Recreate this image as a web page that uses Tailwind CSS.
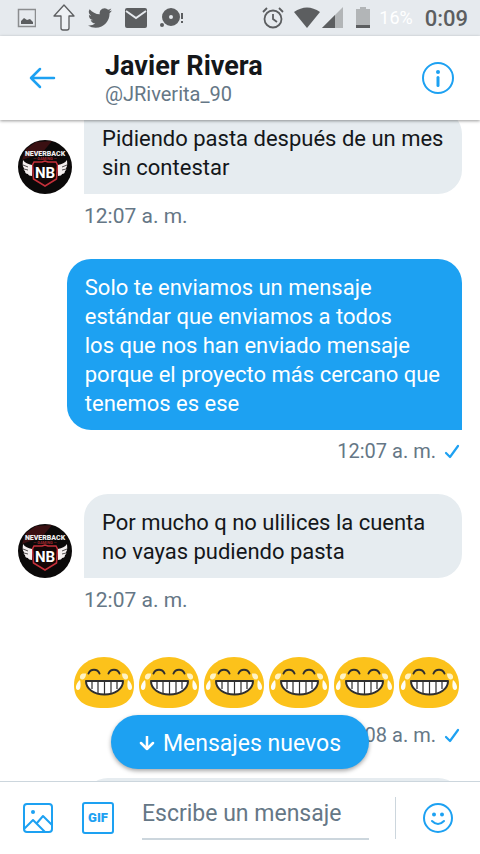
<!DOCTYPE html>
<html lang="es">
<head>
    <meta charset="UTF-8">
    <meta name="viewport" content="width=device-width, initial-scale=1.0">
    <title>Javier Rivera</title>
    <script src="https://cdn.jsdelivr.net/npm/@tailwindcss/browser@4"></script>
</head>
<body class="bg-white font-['Roboto','Noto_Sans',sans-serif]">

<!-- Shared drawings -->
<svg class="hidden">
    <symbol id="avatar" viewBox="0 0 54 54">
        <circle cx="27" cy="27" r="27" fill="#0b0909"/>
        <path d="M8 9 18 2 34 1 24 13 4 20Z" fill="#3a1012"/>
        <path d="M16 22h8l3-1 3 1h8l1.500 3-1 14L27 46l-11.500-7-1-14Z" fill="#140607" stroke="#c5303a" stroke-width="1.500"/>
        <path d="M5 20c2 3 5 4 9 5v11c-2 0-4-1-4-2-2 0-3-1-3-3-2-1-1-2-1-3-2-2-1-6-1-8Z" fill="#f3eeee"/>
        <path d="M49 20c-2 3-5 4-9 5v11c2 0 4-1 4-2 2 0 3-1 3-3 2-1 1-2 1-3 2-2 1-6 1-8Z" fill="#f3eeee"/>
        <path d="m5 25 5 2M6 29l4 1M49 25l-5 2M48 29l-4 1" stroke="#0b0909" stroke-width=".7"/>
        <text x="27" y="16" text-anchor="middle" font-size="7" font-weight="900" fill="#eee">NEVERBACK</text>
        <text x="27" y="20" text-anchor="middle" font-size="4" font-weight="700" fill="#a3262e">— GAMING —</text>
        <text x="27" y="38" text-anchor="middle" font-size="15" font-weight="700" fill="#fff">NB</text>
    </symbol>
    <symbol id="laugh" viewBox="0 0 61 52">
        <path d="M30 0C47 0 60 12 60 28 60 43 50 51 30 51S0 43 0 28C0 12 13 0 30 0Z" fill="#fcc21b"/>
        <path d="M14.500 16.500c2-5 9-5 11 0M34.500 16.500c2-5 9-5 11 0" fill="none" stroke="#2f2f2f" stroke-width="2" stroke-linecap="round"/>
        <path d="M12 24h37c0 8-8 13.500-18.500 13.500S12 32 12 24Z" fill="#fff" stroke="#2f2f2f" stroke-width="2" stroke-linejoin="round"/>
        <path d="M18 24v8M24 24v12M30.500 24v13M37 24v12M43 24v8" stroke="#2f2f2f" stroke-width="1.200"/>
        <path d="M12 16.500c0 4-2 6-4 6s-3-3-1-5 3-.500 5-1ZM48 16.500c0 4 2 6 4 6s3-3 1-5-3-.500-5-1Z" fill="#fff3c4"/>
        <path d="M6 23c1 4 1 10-2 10s-3-6 2-10ZM54 23c-1 4-1 10 2 10s3-6-2-10Z" fill="#fdfdf6"/>
    </symbol>
    <symbol id="check" viewBox="0 0 16 16">
        <path d="m2 9 4 4 8-11" fill="none" stroke="#1da1f2" stroke-width="2.200" stroke-linecap="round" stroke-linejoin="round"/>
    </symbol>
</svg>

<div class="flex h-screen flex-col overflow-hidden">

    <!-- Status bar -->
    <div class="flex h-9 shrink-0 items-center justify-between bg-[#e6eaee] pl-4 pr-3 text-[#5c5e60]">
        <div class="flex items-center gap-3">
            <svg class="mr-1 h-5 w-5" viewBox="0 0 20 20"><rect x="2.500" y="1.500" width="17" height="17" fill="none" stroke="#8b8d8f" stroke-width="1.500"/><path d="M5 16v-3l3-3 3 2 3-1 3 3v2Z" fill="currentColor"/></svg>
            <svg class="h-7 w-6" viewBox="0 0 24 28"><path d="M12 1 22 12h-5v12q0 2-2 2h-4q-2 0-2-2V12H2Z" fill="#eef1f4" stroke="currentColor" stroke-width="1.300" stroke-linejoin="round"/></svg>
            <svg class="h-6 w-6" viewBox="0 0 24 24" fill="currentColor"><path d="M23.950 4.570a10 10 0 0 1-2.820.770 4.960 4.960 0 0 0 2.160-2.720c-.950.550-2 .950-3.130 1.180a4.920 4.920 0 0 0-8.380 4.480C7.690 8.100 4.070 6.130 1.640 3.160a4.930 4.930 0 0 0 1.520 6.580 4.900 4.900 0 0 1-2.230-.620v.060a4.920 4.920 0 0 0 3.950 4.830 5 5 0 0 1-2.210.080 4.940 4.940 0 0 0 4.600 3.420A9.870 9.870 0 0 1 0 19.540a14 14 0 0 0 7.550 2.210c9.050 0 14-7.500 14-13.980 0-.210 0-.420-.020-.630a10 10 0 0 0 2.420-2.570Z"/></svg>
            <svg class="h-6 w-6" viewBox="0 0 24 24"><rect x="1" y="2" width="22" height="20" rx="2" fill="currentColor"/><path d="m2 5 10 7 10-7" fill="none" stroke="#e6eaee" stroke-width="2"/></svg>
            <svg class="h-6 w-6" viewBox="0 0 24 24" fill="currentColor"><path d="M11 2a9 9 0 1 1 0 18 9 9 0 0 1 0-18Zm0 7a2 2 0 1 0 0 4 2 2 0 0 0 0-4Z" fill-rule="evenodd"/><circle cx="2" cy="19" r="2"/><path d="M21 7h2v6h-2zM21 15h2v2h-2z"/></svg>
        </div>
        <div class="flex items-center">
            <svg class="h-6 w-6" viewBox="0 0 24 24" fill="none" stroke="currentColor" stroke-width="1.800"><circle cx="12" cy="13" r="8.500"/><path d="M12 8v5l4 3M2 6l4-4M22 6l-4-4"/></svg>
            <svg class="ml-2 h-6 w-7" viewBox="0 0 28 24"><path d="M1 6q13-9 26 0L14 22Z" fill="currentColor"/></svg>
            <svg class="h-6 w-6" viewBox="0 0 24 24"><path d="M1 22 22 1v21Z" fill="#b2b5b7"/><path d="M1 22 14 9v13Z" fill="currentColor"/></svg>
            <svg class="ml-1.5 h-6 w-6" viewBox="0 0 24 24"><path d="M5 3h4V1h6v2h4v19H5Z" fill="#b2b5b7"/><path d="M5 19h14v3H5z" fill="currentColor"/></svg>
            <span class="ml-1 text-lg text-white">16%</span>
            <span class="ml-3 text-[22px] font-medium">0:09</span>
        </div>
    </div>

    <!-- Header -->
    <header class="z-10 flex h-[84px] shrink-0 items-center bg-white pl-7 pr-6 shadow-[0_1px_3px_rgba(0,0,0,0.4)]">
        <button type="button" aria-label="Atrás" class="text-[#1da1f2]">
            <svg class="h-7 w-7" viewBox="0 0 28 28" fill="none" stroke="currentColor" stroke-width="2.500" stroke-linecap="round" stroke-linejoin="round"><path d="M26 14H3M12 5l-9 9 9 9"/></svg>
        </button>
        <div class="ml-[49px] flex-1">
            <h1 class="text-[27px] leading-8 font-bold text-[#14171a]">Javier Rivera</h1>
            <p class="text-xl leading-6 text-[#657786]">@JRiverita_90</p>
        </div>
        <button type="button" aria-label="Información" class="text-[#1da1f2]">
            <svg class="h-9 w-9" viewBox="0 0 36 36"><circle cx="18" cy="18" r="15" fill="none" stroke="currentColor" stroke-width="2"/><circle cx="18" cy="12" r="2" fill="currentColor"/><path d="M18 17.500v8" stroke="currentColor" stroke-width="3" stroke-linecap="round"/></svg>
        </button>
    </header>

    <!-- Messages -->
    <main class="relative min-h-0 flex-1">
        <div class="flex h-full flex-col overflow-hidden px-[18px] text-[22px] leading-[29px] text-[#14171a]">
            <div class="-mt-[10px] flex shrink-0 items-end gap-3">
                <svg class="h-[54px] w-[54px] shrink-0" role="img" aria-label="Neverback Gaming"><use href="#avatar"/></svg>
                <p class="flex-1 rounded-r-3xl bg-[#e6ecf0] px-[18px] pt-[14px] pb-3">Pidiendo pasta después de un mes<br>sin contestar</p>
            </div>
            <time class="mt-2 ml-[66px] shrink-0 text-[21px] text-[#657786]">12:07 a. m.</time>

            <p class="mt-7 shrink-0 self-end rounded-3xl rounded-br-none bg-[#1da1f2] pt-[14px] pr-[22px] pb-3 pl-[18px] text-white">Solo te enviamos un mensaje<br>estándar que enviamos a todos<br>los que nos han enviado mensaje<br>porque el proyecto más cercano que<br>tenemos es ese</p>
            <div class="mt-[7px] flex shrink-0 items-center gap-2 self-end pr-0.5 text-xl leading-[29px] text-[#657786]">
                <time>12:07 a. m.</time>
                <svg class="h-4 w-4" role="img" aria-label="Enviado"><use href="#check"/></svg>
            </div>

            <div class="mt-7 flex shrink-0 items-end gap-3">
                <svg class="h-[54px] w-[54px] shrink-0" role="img" aria-label="Neverback Gaming"><use href="#avatar"/></svg>
                <p class="flex-1 rounded-3xl rounded-bl-none bg-[#e6ecf0] px-[18px] pt-[14px] pb-3">Por mucho q no ulilices la cuenta<br>no vayas pudiendo pasta</p>
            </div>
            <time class="mt-2 ml-[66px] shrink-0 text-[21px] text-[#657786]">12:07 a. m.</time>

            <div class="mt-[42px] flex shrink-0 gap-1 self-end pr-0.5">
                <svg class="h-[52px] w-[61px]"><use href="#laugh"/></svg>
                <svg class="h-[52px] w-[61px]"><use href="#laugh"/></svg>
                <svg class="h-[52px] w-[61px]"><use href="#laugh"/></svg>
                <svg class="h-[52px] w-[61px]"><use href="#laugh"/></svg>
                <svg class="h-[52px] w-[61px]"><use href="#laugh"/></svg>
                <svg class="h-[52px] w-[61px]"><use href="#laugh"/></svg>
            </div>
            <div class="mt-3 flex shrink-0 items-center gap-2 self-end pr-0.5 text-xl leading-[29px] text-[#657786]">
                <time>12:08 a. m.</time>
                <svg class="h-4 w-4" role="img" aria-label="Enviado"><use href="#check"/></svg>
            </div>

            <div class="mt-7 ml-[66px] h-20 shrink-0 rounded-3xl rounded-bl-none bg-[#e6ecf0]"></div>
        </div>

        <button type="button" class="absolute bottom-3 left-1/2 flex h-[54px] -translate-x-1/2 items-center gap-2 rounded-full bg-[#1da1f2] px-7 pt-1 text-[23px] whitespace-nowrap text-white shadow-[0_2px_4px_rgba(0,0,0,0.35)]">
            <svg class="h-4 w-4" viewBox="0 0 16 16" fill="none" stroke="currentColor" stroke-width="2.500" stroke-linecap="round" stroke-linejoin="round"><path d="M8 0v13M2 7l6 6 6-6"/></svg>
            Mensajes nuevos
        </button>
    </main>

    <!-- Composer -->
    <form class="flex h-[73px] shrink-0 items-center border-t border-[#ccd6dd] bg-white pr-[26px] pl-[22px] text-[#1da1f2]">
        <button type="button" aria-label="Foto">
            <svg class="h-8 w-8" viewBox="0 0 32 32" fill="none" stroke="currentColor" stroke-width="2" stroke-linejoin="round"><rect x="2" y="2" width="28" height="28" rx="3"/><path d="m2 27 9-9 12 12M15 21l6-7 9 9"/><circle cx="11" cy="10" r="2" fill="currentColor" stroke="none"/></svg>
        </button>
        <button type="button" aria-label="GIF" class="ml-7 flex h-8 w-8 items-center justify-center rounded-[3px] border-2 border-current text-[13px] font-black">GIF</button>
        <input type="text" aria-label="Mensaje" placeholder="Escribe un mensaje" class="mr-[26px] ml-7 h-11 min-w-0 flex-1 border-b-2 border-[#ccd6dd] pb-2 text-[23px] text-[#14171a] outline-none placeholder:text-[#657786]">
        <div class="h-[42px] border-l border-[#ccd6dd]"></div>
        <button type="button" aria-label="Emoji" class="ml-[26px]">
            <svg class="h-8 w-8" viewBox="0 0 32 32" fill="none" stroke="currentColor" stroke-width="2" stroke-linecap="round"><circle cx="16" cy="16" r="14"/><circle cx="12" cy="12.500" r="2" fill="currentColor" stroke="none"/><circle cx="20" cy="12.500" r="2" fill="currentColor" stroke="none"/><path d="M10 19q6 6 12 0"/></svg>
        </button>
    </form>

</div>

</body>
</html>
